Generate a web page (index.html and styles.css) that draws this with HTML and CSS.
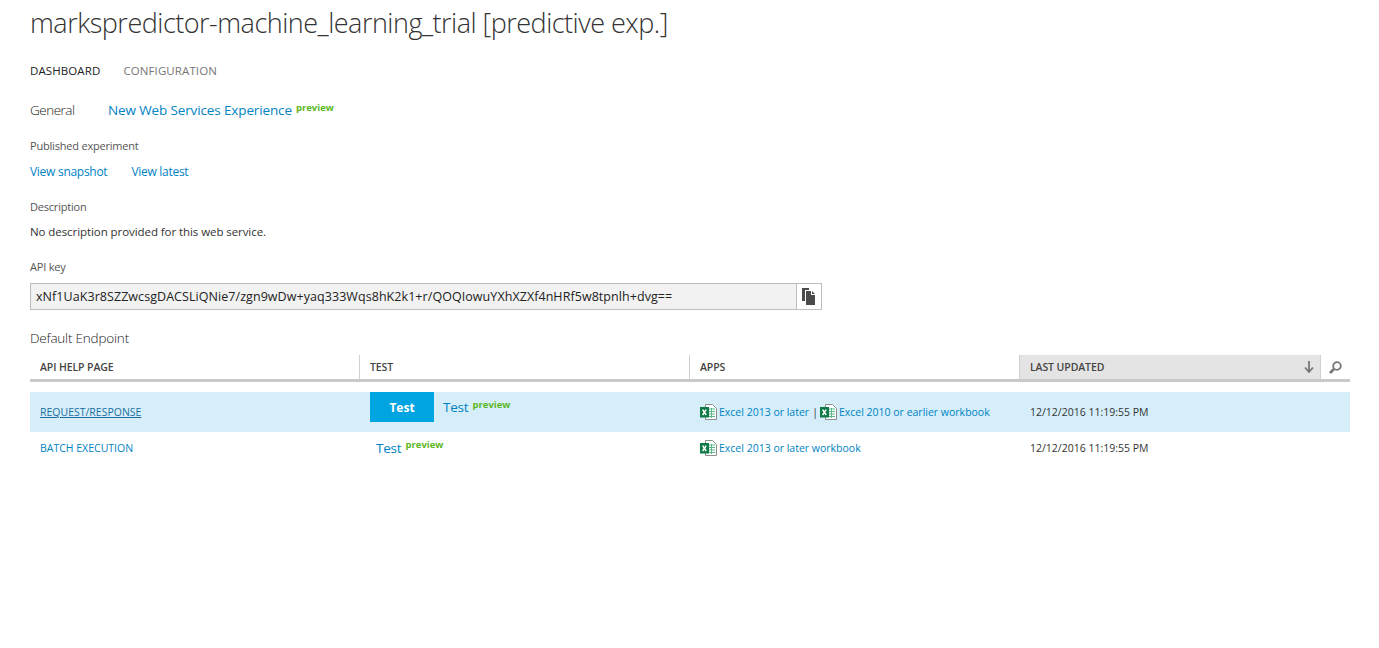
FILE: index.html
```html
<!DOCTYPE html>
<html lang="en">
<head>
  <meta charset="UTF-8">
  <title>markspredictor-machine_learning_trial [predictive exp.]</title>
  <link rel="stylesheet" href="styles.css">
</head>
<body>

  <svg class="defs" width="0" height="0">
    <symbol id="excel" viewBox="0 0 17 16">
      <path d="M5.5.5h7l4 4v11h-11z" fill="#fff" stroke="#8a8f8c"/>
      <path d="M9 5h6M9 7.5h6M9 10h6M9 12.5h6M11.5 4v10" stroke="#5cb98a" fill="none"/>
      <rect x="0" y="3" width="9" height="10.5" fill="#0f7a45"/>
      <path d="M2.6 5.6l3.6 5.4M6.2 5.6l-3.6 5.4" stroke="#fff" stroke-width="1.5" fill="none"/>
    </symbol>
  </svg>

  <h1 class="title">markspredictor-machine_learning_trial [predictive exp.]</h1>

  <nav class="tabs">
    <a class="tab active">DASHBOARD</a>
    <a class="tab">CONFIGURATION</a>
  </nav>

  <div class="general">
    <span class="general-label">General</span>
    <a class="link big">New Web Services Experience</a>
    <sup class="preview">preview</sup>
  </div>

  <div class="label published">Published experiment</div>
  <div class="links">
    <a class="link">View snapshot</a>
    <a class="link">View latest</a>
  </div>

  <div class="label description">Description</div>
  <p class="text">No description provided for this web service.</p>

  <div class="label apikey">API key</div>
  <div class="keybox">
    <div class="keyvalue">xNf1UaK3r8SZZwcsgDACSLiQNie7/zgn9wDw+yaq333Wqs8hK2k1+r/QOQIowuYXhXZXf4nHRf5w8tpnlh+dvg==</div>
    <button class="copy" aria-label="Copy">
      <svg width="14" height="17" viewBox="0 0 14 17">
        <path d="M0 0h7v2H3v11H0z" fill="#4a4a4a"/>
        <path d="M4 3h5v4h4v10H4zM10 3l3 3h-3z" fill="#4a4a4a"/>
      </svg>
    </button>
  </div>

  <h2 class="endpoint">Default Endpoint</h2>

  <div class="grid head">
    <div class="th">API HELP PAGE</div>
    <div class="th">TEST</div>
    <div class="th">APPS</div>
    <div class="th sorted">LAST UPDATED
      <svg class="arrow" width="10" height="12" viewBox="0 0 10 12"><path d="M5 0v10M1 6.5L5 11l4-4.500" stroke="#777" stroke-width="1.800" fill="none"/></svg>
    </div>
    <div class="th search">
      <svg width="13" height="13" viewBox="0 0 13 13"><circle cx="8" cy="5" r="3.800" stroke="#777" stroke-width="1.800" fill="none"/><path d="M5 8l-4 4" stroke="#777" stroke-width="2.600"/></svg>
    </div>
  </div>

  <div class="grid row selected">
    <div class="td"><a class="link under">REQUEST/RESPONSE</a></div>
    <div class="td test">
      <button class="test-btn">Test</button>
      <a class="link test-link">Test</a><sup class="preview">preview</sup>
    </div>
    <div class="td apps">
      <svg class="xl"><use href="#excel"/></svg><a class="link">Excel 2013 or later</a>
      <span class="sep">|</span>
      <svg class="xl"><use href="#excel"/></svg><a class="link">Excel 2010 or earlier workbook</a>
    </div>
    <div class="td date">12/12/2016 11:19:55 PM</div>
  </div>

  <div class="grid row">
    <div class="td"><a class="link">BATCH EXECUTION</a></div>
    <div class="td test solo">
      <a class="link test-link">Test</a><sup class="preview">preview</sup>
    </div>
    <div class="td apps">
      <svg class="xl"><use href="#excel"/></svg><a class="link">Excel 2013 or later workbook</a>
    </div>
    <div class="td date">12/12/2016 11:19:55 PM</div>
  </div>

</body>
</html>
```

FILE: styles.css
```css
body {
  margin: 0;
  padding: 0 29px 0 30px;
  background-color: #fff;
  font-family: "Open Sans", "Noto Sans", sans-serif;
  font-size: 11px;
  letter-spacing: -0.2px;
  color: #333;
  overflow: hidden;
}

.defs {
  position: absolute;
}

.title {
  margin: 0;
  padding-top: 4px;
  height: 46px;
  font-size: 27px;
  line-height: 38px;
  font-weight: 300;
  letter-spacing: -0.5px;
  white-space: nowrap;
}

.tabs {
  display: flex;
  gap: 23px;
  margin-top: 9px;
  height: 24px;
  line-height: 24px;
  font-size: 11.5px;
  letter-spacing: 0.1px;
}

.tab {
  color: #777;
}

.tab.active {
  color: #222;
}

.link {
  color: #0083c3;
}

.general {
  display: flex;
  align-items: center;
  margin-top: 15px;
  height: 24px;
}

.general-label {
  width: 78px;
  font-size: 13.5px;
  font-weight: 300;
  letter-spacing: -0.5px;
  color: #222;
}

.big {
  font-size: 13.5px;
  letter-spacing: -0.13px;
}

.preview {
  margin-left: 4px;
  font-size: 9.5px;
  font-weight: 700;
  line-height: 12px;
  letter-spacing: 0;
  color: #5cb81f;
  align-self: flex-start;
  margin-top: 4px;
}

.label {
  font-size: 11px;
  line-height: 16px;
  color: #555;
}

.published {
  margin-top: 16px;
}

.links {
  display: flex;
  gap: 24px;
  margin-top: 10px;
  line-height: 16px;
  font-size: 12px;
  letter-spacing: -0.28px;
}

.description {
  margin-top: 19px;
}

.text {
  margin: 9px 0 0;
  font-size: 11.5px;
  line-height: 16px;
  letter-spacing: -0.07px;
}

.apikey {
  margin-top: 19px;
}

.keybox {
  display: flex;
  width: 792px;
  height: 27px;
  margin-top: 8px;
  box-sizing: border-box;
  border: 1px solid #bdbdbd;
}

.keyvalue {
  flex: 1;
  padding-left: 5px;
  background-color: #f2f2f2;
  font-size: 12.5px;
  line-height: 25px;
  letter-spacing: 0.06px;
  color: #222;
  white-space: nowrap;
}

.copy {
  display: flex;
  align-items: center;
  justify-content: center;
  width: 25px;
  padding: 0;
  border: none;
  border-left: 1px solid #bdbdbd;
  background-color: #fff;
}

.endpoint {
  margin: 18px 0 0;
  font-size: 13.5px;
  line-height: 20px;
  font-weight: 300;
  color: #222;
}

.grid {
  display: grid;
  grid-template-columns: 329px 330px 330px 301px 30px;
}

.head {
  margin-top: 7px;
  height: 24px;
  border-bottom: 3px solid #c9c9c9;
}

.th {
  padding-left: 10px;
  border-left: 1px solid #d0d0d0;
  font-size: 10.5px;
  font-weight: 600;
  line-height: 24px;
  letter-spacing: -0.1px;
  color: #444;
}

.th:first-child {
  border-left: none;
}

.sorted {
  display: flex;
  justify-content: space-between;
  align-items: center;
  padding-right: 6px;
  background-color: #e4e4e4;
}

.search {
  display: flex;
  align-items: center;
  padding-left: 8px;
}

.row {
  grid-template-columns: 330px 330px 330px 330px;
  height: 32px;
  align-items: center;
}

.selected {
  margin-top: 10px;
  height: 40px;
  background-color: #d5eefa;
}

.td {
  padding-left: 10px;
  font-size: 10.5px;
  letter-spacing: 0;
}

.under {
  text-decoration: underline;
  color: #1b6f9e;
}

.test {
  display: flex;
  align-items: center;
  height: 100%;
}

.solo {
  padding-left: 16px;
}

.test-btn {
  width: 64px;
  height: 30px;
  margin-right: 9px;
  padding: 0;
  border: none;
  background-color: #00a4e0;
  color: #fff;
  font-family: inherit;
  font-size: 12px;
  font-weight: 700;
}

.selected .test {
  align-items: flex-start;
}

.selected .test-link {
  line-height: 30px;
}

.test-link {
  font-size: 13.5px;
  letter-spacing: -0.2px;
}

.test .preview {
  align-self: center;
  margin-top: 0;
  margin-bottom: 6px;
}

.selected .test .preview {
  align-self: flex-start;
  margin-top: 7px;
  margin-bottom: 0;
}

.apps {
  display: flex;
  align-items: center;
  white-space: nowrap;
}

.xl {
  width: 17px;
  height: 16px;
  margin-right: 2px;
}

.sep {
  margin: 0 2px 0 3px;
}

.date {
  color: #333;
}
```
